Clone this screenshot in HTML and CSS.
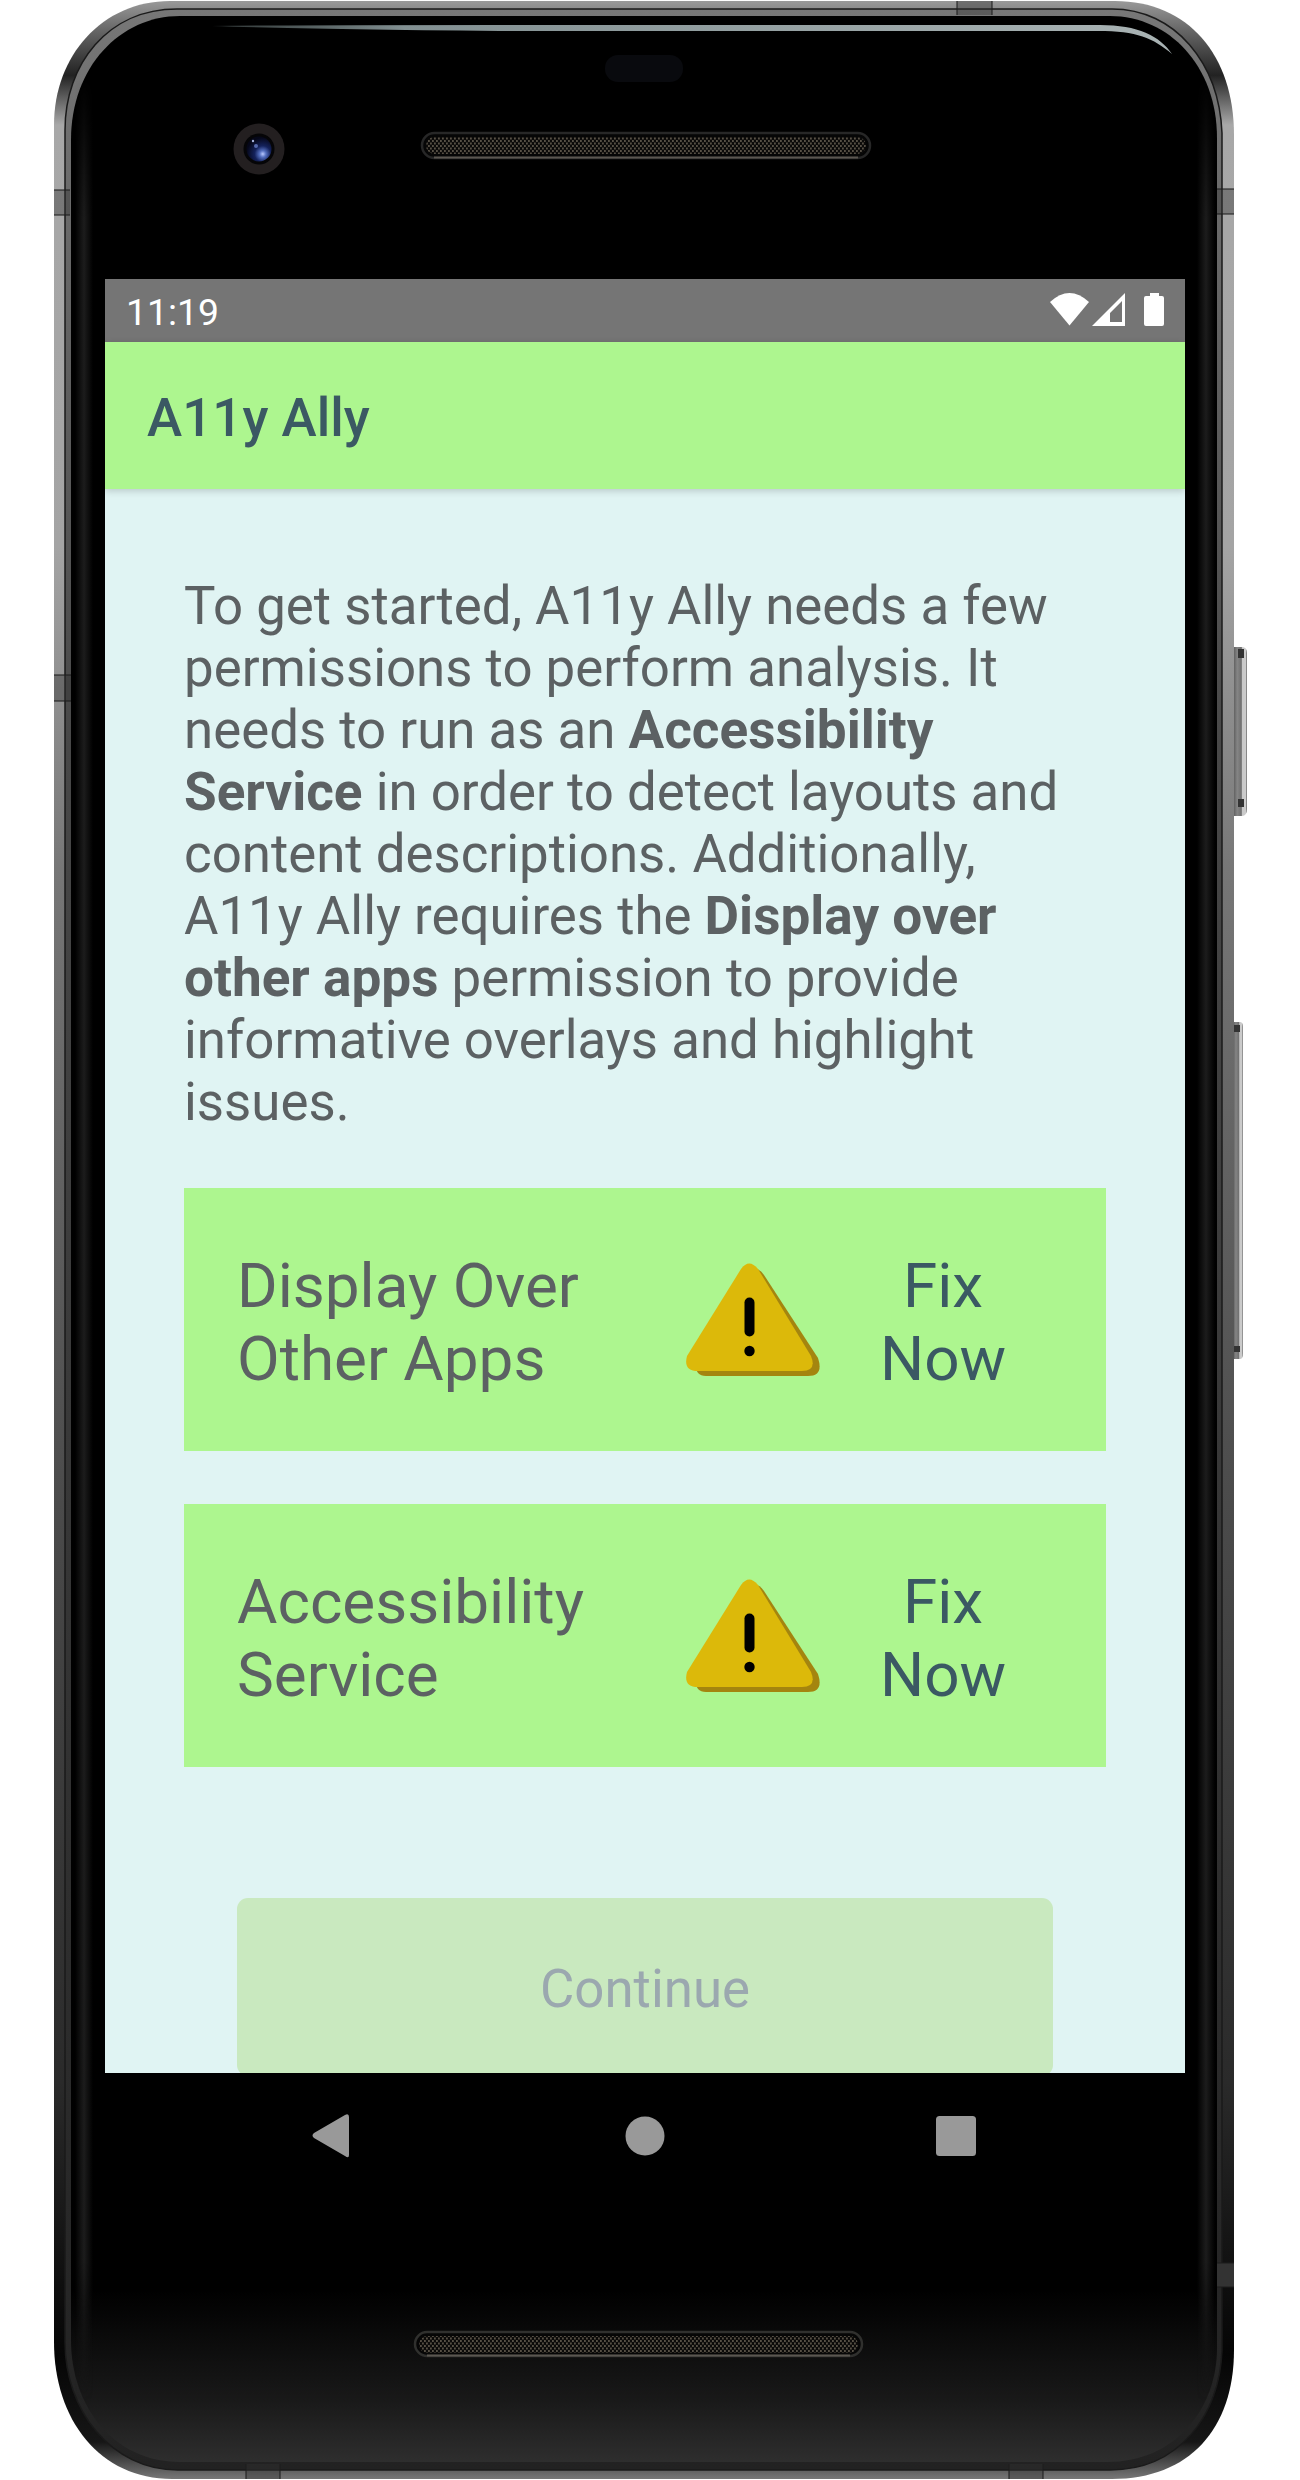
FILE: index.html
```html
<!DOCTYPE html>
<html lang="en">
<head>
<meta charset="utf-8">
<title>A11y Ally</title>
<link rel="stylesheet" href="styles.css">
</head>
<body>
<svg class="frame" viewBox="0 0 1300 2480" aria-hidden="true">
  <defs>
    <linearGradient id="rim" x1="0" y1="0" x2="0" y2="1">
      <stop offset="0" stop-color="#999"/><stop offset=".012" stop-color="#666"/>
      <stop offset=".03" stop-color="#222"/><stop offset=".05" stop-color="#a8a8a8"/>
      <stop offset=".22" stop-color="#a4a4a4"/><stop offset=".35" stop-color="#777"/>
      <stop offset=".6" stop-color="#4c4c4c"/><stop offset=".84" stop-color="#2a2a2a"/>
      <stop offset=".95" stop-color="#050505"/><stop offset=".985" stop-color="#161616"/>
      <stop offset="1" stop-color="#777"/>
    </linearGradient>
    <linearGradient id="inner" x1="0" y1="0" x2="0" y2="1">
      <stop offset="0" stop-color="#777"/><stop offset=".3" stop-color="#484848"/><stop offset="1" stop-color="#222"/>
    </linearGradient>
    <linearGradient id="glass" x1="0" y1="0" x2="0" y2="1">
      <stop offset="0" stop-color="#000"/><stop offset=".93" stop-color="#000"/>
      <stop offset=".975" stop-color="#191919"/><stop offset="1" stop-color="#2e2e2e"/>
    </linearGradient>
    <linearGradient id="shine"><stop offset="0" stop-color="#1c1c1c" stop-opacity="0"/><stop offset=".5" stop-color="#1c1c1c"/><stop offset="1" stop-color="#1c1c1c" stop-opacity="0"/></linearGradient>
    <linearGradient id="fade" x1="0" y1="0" x2="0" y2="1"><stop offset="0" stop-color="#000"/><stop offset=".06" stop-color="#fff"/><stop offset=".94" stop-color="#fff"/><stop offset="1" stop-color="#000"/></linearGradient>
    <mask id="ends" maskUnits="userSpaceOnUse" x="54" y="80" width="1180" height="2320"><rect x="54" y="80" width="1180" height="2320" fill="url(#fade)"/></mask>
    <linearGradient id="glare"><stop offset="0" stop-color="#708080" stop-opacity=".4"/><stop offset=".2" stop-color="#829092"/><stop offset="1" stop-color="#a9b3b4"/></linearGradient>
    <linearGradient id="key"><stop offset="0" stop-color="#4c4c4c"/><stop offset=".35" stop-color="#858585"/><stop offset=".62" stop-color="#707070"/><stop offset=".7" stop-color="#c9c9c9"/><stop offset=".9" stop-color="#ccc"/><stop offset="1" stop-color="#666"/></linearGradient>
    <radialGradient id="lens" cx=".65" cy=".7" r=".65"><stop offset="0" stop-color="#b9c9ff"/><stop offset=".2" stop-color="#5570c0"/><stop offset=".5" stop-color="#14225c"/><stop offset="1" stop-color="#050719"/></radialGradient>
    <pattern id="mesh" width="4" height="5" patternUnits="userSpaceOnUse"><rect width="4" height="5" fill="#0b0a09"/><rect width="1.8" height="2" fill="#575045"/><rect x="2" y="2.500" width="1.8" height="2" fill="#575045"/></pattern>
  </defs>
  <path d="M1232 647h10q5 0 5 6v156q0 7-5 7h-10z" fill="url(#key)"/>
  <path d="M1238 649h6v9h-6zM1238 799h6v8h-6z" fill="#333"/>
  <path d="M1232 1022h8q3 0 3 5v326q0 6-3 6h-8z" fill="url(#key)"/>
  <path d="M1234 1025h6v7h-6zM1234 1346h6v6h-6z" fill="#333"/>
  <path d="M170 1H1115C1188 1 1234 55 1234 135V2350C1234 2429 1189 2479 1112 2479H172C100 2479 54 2420 54 2342V125C54 56 102 1 170 1Z" fill="url(#rim)"/>
  <path d="M177 9H1112C1175 9 1219 63 1222 133V2350C1220 2415 1179 2470 1110 2470H178C111 2470 65 2410 65 2342V130C65 64 108 9 177 9Z" fill="url(#inner)" stroke="#1a1a1a" stroke-width="1.5"/>
  <path d="M180 16H1110C1169 16 1217 66 1217 138V2348C1217 2408 1176 2462 1107 2462H180C114 2462 71 2407 71 2340V140C71 67 120 16 180 16Z" fill="url(#glass)"/>
  <g mask="url(#ends)" fill="url(#shine)">
    <rect x="75" y="80" width="18" height="2320"/>
    <rect x="1197" y="80" width="18" height="2320"/>
  </g>
  <path d="M212 26Q290 25 500 25H1100C1138 25 1160 36 1172 54C1153 38 1137 31 1098 31H500Q290 29 212 26Z" fill="url(#glare)"/>
  <path d="M54 190h16v25H54zM54 675h17v26H54zM1217 189h17v25h-17zM957 1h35v14h-35zM246 2464h34v15h-34zM1009 2464h34v15h-34z" fill="#333" fill-opacity=".4"/>
  <path d="M1217 2263h17v24h-17z" fill="#333"/>
  <path d="M54 190h16M54 215h16M54 675h17M54 701h17M1217 189h17M1217 214h17M957 1v14M992 1v14M1217 2263h17M1217 2287h17M246 2464v15M280 2464v15M1009 2464v15M1043 2464v15" stroke="#1c1c1c" stroke-opacity=".7" stroke-width="1.500"/>
  <rect x="605" y="55" width="78" height="27" rx="13" fill="#090a0e"/>
  <circle cx="259" cy="149" r="25.500" fill="#231f20"/>
  <circle cx="259" cy="149" r="15.500" fill="#050507"/>
  <circle cx="259" cy="149" r="12.500" fill="url(#lens)"/>
  <circle cx="256" cy="146" r="2" fill="#5569ad"/><circle cx="253" cy="141" r="1.200" fill="#a6b4de"/>
  <g stroke-width="2.500" fill="#060606">
    <rect x="422" y="133" width="448" height="25" rx="12.500" stroke="#272727"/>
    <rect x="415" y="2332" width="447" height="24" rx="12" stroke="#30302e"/>
  </g>
  <path d="M434 157.500H858M427 2355.500H850" stroke="#5b5650" stroke-width="2"/>
  <rect x="426" y="137" width="440" height="17" rx="8.500" fill="url(#mesh)"/>
  <rect x="419" y="2336" width="439" height="17" rx="8.500" fill="url(#mesh)"/>
</svg>
<div class="device">
  <main class="screen">
    <div class="status">
      <span class="time">11:19</span>
      <svg class="status-icons" viewBox="0 0 118 40" aria-hidden="true">
        <path d="M0 12Q19.500-6 39 12L19.500 35.500Z" fill="#fff"/>
        <path fill-rule="evenodd" d="M75 3V36H42ZM72 11L60 23V32H72Z" fill="#fff"/>
        <path d="M100 3h9v3h3q2 0 2 2v26q0 2-2 2H96q-2 0-2-2V8q0-2 2-2h4Z" fill="#fff"/>
      </svg>
    </div>
    <header class="appbar">A11y Ally</header>
    <section class="content">
      <p class="intro">To get started, A11y Ally needs a few<br>permissions to perform analysis. It<br>needs to run as an <b>Accessibility</b><br><b>Service</b> in order to detect layouts and<br>content descriptions. Additionally,<br>A11y Ally requires the <b>Display over</b><br><b>other apps</b> permission to provide<br>informative overlays and highlight<br>issues.</p>
      <div class="card">
        <span class="label">Display Over<br>Other Apps</span>
        <svg class="warn" viewBox="0 0 134 113" aria-hidden="true"><use href="#warning"/></svg>
        <a class="fix">Fix<br>Now</a>
      </div>
      <div class="card">
        <span class="label">Accessibility<br>Service</span>
        <svg class="warn" viewBox="0 0 134 113" aria-hidden="true">
          <g id="warning">
            <path d="M60 12Q69-1 78 12L132 95Q138 113 122 113H20Q7 113 10 95Z" fill="#a4850f"/>
            <path d="M55 6Q63-5 72 6L125 93Q131 108 116 108H12Q-3 108 1 93Z" fill="#dcb90a"/>
            <rect x="58.500" y="34.500" width="10" height="39" rx="5"/>
            <circle cx="63.500" cy="88" r="5.200"/>
          </g>
        </svg>
        <a class="fix">Fix<br>Now</a>
      </div>
      <div class="continue">Continue</div>
    </section>
  </main>
  <nav class="nav">
    <svg viewBox="0 0 680 44" aria-hidden="true" fill="#999">
      <path d="M2 19L33 1Q37-1 37 3V41Q37 45 33 42L2 24Q-1 21.500 2 19Z"/>
      <circle cx="333" cy="22" r="19.500"/>
      <rect x="624" y="2" width="40" height="40" rx="3.500"/>
    </svg>
  </nav>
</div>
</body>
</html>
```
FILE: styles.css
```css
* { box-sizing: border-box; }
body {
  margin: 0;
  width: 1300px;
  height: 2480px;
  overflow: hidden;
  background: #fff;
  font-family: Roboto, sans-serif;
}
/* The phone shell lies behind the screen. */
.frame { position: absolute; left: 0; top: 0; width: 1300px; height: 2480px; }
.device {
  position: relative;
  width: 1185px;
  padding: 279px 0 0 105px;
}
.screen {
  display: flex;
  flex-direction: column;
  height: 1794px;
  overflow: hidden;
  background: #e0f4f3;
}
.status {
  display: flex;
  flex: none;
  align-items: center;
  justify-content: space-between;
  height: 63px;
  padding: 2px 17px 0 21px;
  background: #757575;
  color: #fff;
  font-size: 37.3px;
}
.status-icons { width: 118px; height: 40px; margin-top: -4px; }
.appbar {
  flex: none;
  height: 147px;
  padding: 0 42px;
  line-height: 152px;
  background: #adf68f;
  color: #3b5963;
  font-size: 53px;
  font-weight: 500;
  box-shadow: 0 2px 7px rgba(0, 0, 0, .18);
}
.content { display: flex; flex-direction: column; padding: 86px 79px 0; }
.intro {
  height: 613px;
  margin: 0;
  color: #5c6163;
  font-size: 52.8px;
  line-height: 62px;
  white-space: nowrap;
}
.intro b { font-weight: 700; font-size: 53.1px; }
.card {
  display: flex;
  flex: none;
  align-items: center;
  height: 263px;
  margin-bottom: 53px;
  padding-left: 53px;
  background: #adf68f;
  color: #5c6163;
  font-size: 62px;
  line-height: 73px;
}
.label { width: 449px; padding-top: 5px; white-space: nowrap; }
.warn { width: 134px; height: 113px; }
.fix { width: 246px; padding-top: 5px; text-align: center; color: #3b5963; }
.continue {
  flex: none;
  height: 178px;
  margin: 78px 53px 0;
  border-radius: 11px;
  background: #c9e9bf;
  color: #9ba8af;
  font-size: 52.8px;
  line-height: 182px;
  text-align: center;
}
.nav { display: flex; padding: 41px 0 0 207px; }
.nav svg { width: 680px; height: 44px; }
```
